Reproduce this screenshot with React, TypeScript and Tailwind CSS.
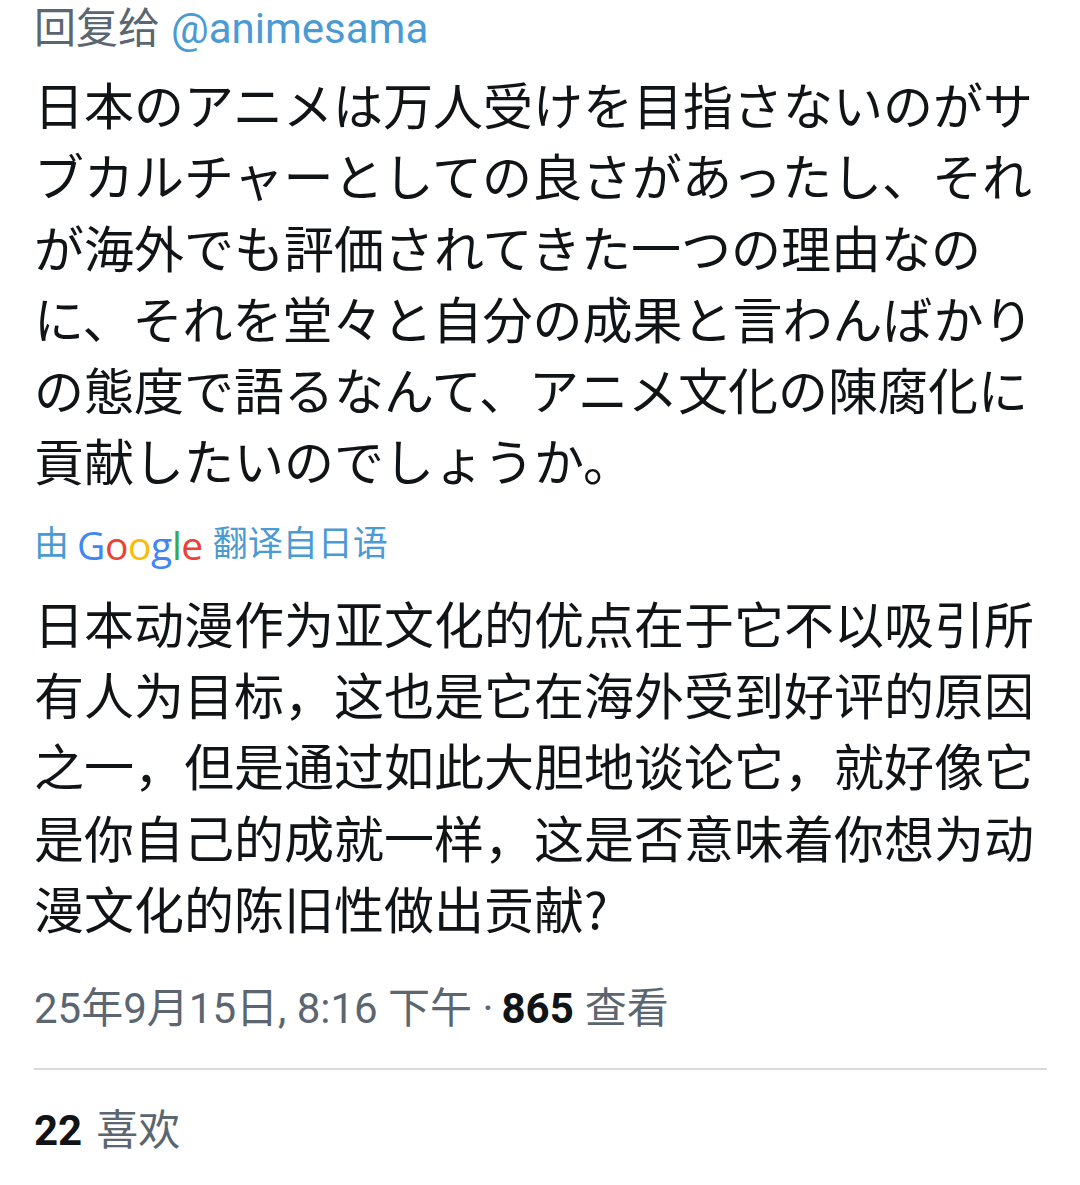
import React from 'react';

const JP = '"Noto Sans CJK JP", "Noto Sans", sans-serif';
const SC = 'Roboto, "Noto Sans CJK SC", sans-serif';

const ORIGINAL =
  '日本のアニメは万人受けを目指さないのがサブカルチャーとしての良さがあったし、それが海外でも評価されてきた一つの理由なのに、それを堂々と自分の成果と言わんばかりの態度で語るなんて、アニメ文化の陳腐化に貢献したいのでしょうか。';

const TRANSLATED =
  '日本动漫作为亚文化的优点在于它不以吸引所有人为目标，这也是它在海外受到好评的原因之一，但是通过如此大胆地谈论它，就好像它是你自己的成就一样，这是否意味着你想为动漫文化的陈旧性做出贡献?';

const GoogleMark: React.FC = () => (
  <span className="ml-[8px] text-[39px] font-medium tracking-[-0.4px]" style={{ fontFamily: '"Open Sans", Roboto, sans-serif' }}>
    <span className="text-[#4285f4]">G</span>
    <span className="text-[#ea4335]">o</span>
    <span className="text-[#fbbc05]">o</span>
    <span className="text-[#4285f4]">g</span>
    <span className="text-[#34a853]">l</span>
    <span className="text-[#ea4335]">e</span>
  </span>
);

const App: React.FC = () => {
  return (
    <div className="bg-white min-h-screen w-[1080px] pl-[34px] pr-[33px]">
      {/* reply header */}
      <div className="h-[56px] flex items-center text-[42px] text-[#5b6670]" style={{ fontFamily: SC }}>
        <span>回复给</span>
        <span className="ml-[11px] text-[#4a9ad3]">@animesama</span>
      </div>

      {/* original tweet text */}
      <p className="mt-[12px] text-[50px] leading-[71.3px] text-[#111417]" style={{ fontFamily: JP }}>
        {ORIGINAL}
      </p>

      {/* translated by */}
      <div className="mt-[24px] h-[50px] flex items-center text-[35px] text-[#4a9ad3]" style={{ fontFamily: SC }}>
        <span>由</span>
        <GoogleMark />
        <span className="ml-[10px]">翻译自日语</span>
      </div>

      <p className="mt-[17px] text-[50px] leading-[71.3px] text-[#111417]" style={{ fontFamily: '"Noto Sans CJK SC", sans-serif' }}>
        {TRANSLATED}
      </p>

      {/* meta */}
      <div className="mt-[37px] h-[56px] flex items-center text-[42px] text-[#5b6670]" style={{ fontFamily: SC }}>
        <span>25年9月15日, 8:16 下午 · </span>
        <span className="ml-[8px] font-bold text-[#111417]">865</span>
        <span className="ml-[11px]">查看</span>
      </div>

      <div className="mt-[32px] h-[2px] bg-[#dadada]" />

      <div className="mt-[32px] h-[56px] flex items-center text-[42px]" style={{ fontFamily: SC }}>
        <span className="font-bold text-[#111417]">22</span>
        <span className="ml-[14px] text-[#5b6670]">喜欢</span>
      </div>
    </div>
  );
};

export default App;
